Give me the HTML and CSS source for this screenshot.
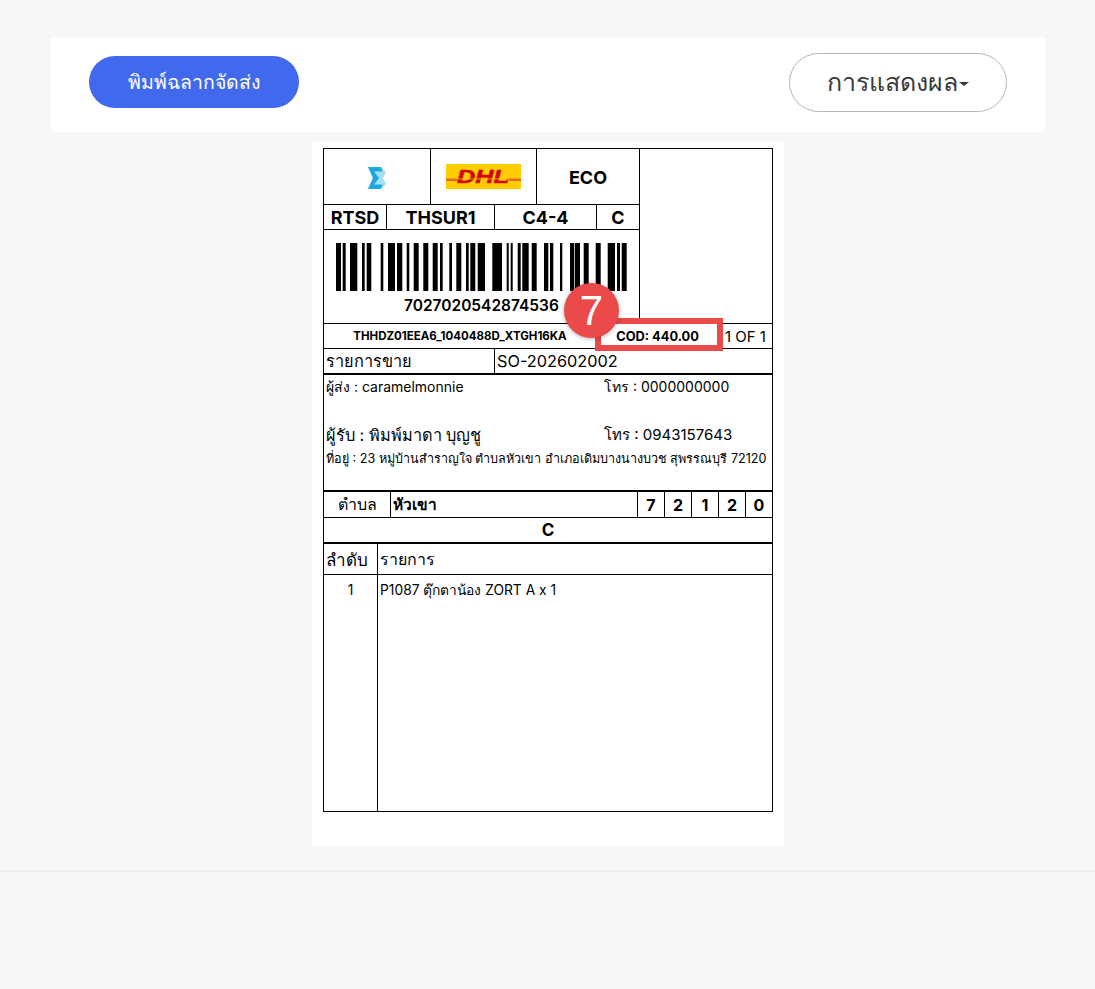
FILE: index.html
```html
<!DOCTYPE html>
<html lang="th">
<head>
  <meta charset="UTF-8" />
  <title>พิมพ์ฉลากจัดส่ง</title>
  <link rel="stylesheet" href="styles.css">
</head>
<body>

  <div class="toolbar">
    <button class="print-btn">พิมพ์ฉลากจัดส่ง</button>
    <button class="view-btn">การแสดงผล<span class="caret"></span></button>
  </div>

  <div class="sheet">
    <div class="label">

      <div class="top">
        <div class="top-left">
          <div class="row row-logos">
            <div class="cell w-zort">
              <svg class="zort" width="18" height="22" viewBox="0 0 18 22">
                <polygon points="0,0 13,0 18,5 15,11 18,17 13,22 0,22 5,11" fill="#a5e0f4"/>
                <polygon points="0,0 13,0 14.5,4.5 6,4.5 11,11 6,17.5 14.5,17.5 13,22 0,22 5,11" fill="#1da6e6"/>
              </svg>
            </div>
            <div class="cell w-dhl">
              <svg width="75" height="25" viewBox="0 0 75 25">
                <rect width="75" height="25" fill="#ffcc00"/>
                <rect x="0" y="14.5" width="12" height="2.5" fill="#e5691a"/>
                <rect x="60" y="14.5" width="15" height="2.5" fill="#e5691a"/>
                <text x="11" y="19" class="dhl-text" textLength="52" lengthAdjust="spacingAndGlyphs">DHL</text>
                <rect x="9" y="14.6" width="55" height="0.7" fill="#ffcc00"/>
              </svg>
            </div>
            <div class="cell w-eco bold big">ECO</div>
          </div>
          <div class="row row-codes bold big">
            <div class="cell w-rtsd">RTSD</div>
            <div class="cell w-hub">THSUR1</div>
            <div class="cell w-zone">C4-4</div>
            <div class="cell grow">C</div>
          </div>
          <div class="barcode">
            <svg width="315" height="50" viewBox="0 0 315 50">
              <g fill="#000">
                <rect x="12" width="5" height="48"/><rect x="18.7" width="3" height="48"/>
                <rect x="26" width="7.3" height="48"/><rect x="38" width="2.7" height="48"/>
                <rect x="42.7" width="4.6" height="48"/><rect x="56.7" width="2.6" height="48"/>
                <rect x="64" width="7" height="48"/><rect x="73" width="5.3" height="48"/>
                <rect x="82.7" width="2.6" height="48"/><rect x="89.7" width="5" height="48"/>
                <rect x="99.3" width="5" height="48"/><rect x="108.7" width="5" height="48"/>
                <rect x="116" width="2.7" height="48"/><rect x="125.3" width="2.7" height="48"/>
                <rect x="132.3" width="5" height="48"/><rect x="142" width="2.7" height="48"/>
                <rect x="146.3" width="5" height="48"/><rect x="153.7" width="7.3" height="48"/>
                <rect x="168.3" width="9.7" height="48"/><rect x="182.7" width="2" height="48"/>
                <rect x="186.7" width="2" height="48"/><rect x="193.7" width="3" height="48"/>
                <rect x="198.3" width="6.4" height="48"/><rect x="207.7" width="5" height="48"/>
                <rect x="220" width="4.3" height="48"/><rect x="226" width="3.3" height="48"/>
                <rect x="236" width="2.3" height="48"/><rect x="246" width="4.3" height="48"/>
                <rect x="251" width="5" height="48"/><rect x="259.7" width="5" height="48"/>
                <rect x="271.7" width="5" height="48"/><rect x="283.7" width="7.3" height="48"/>
                <rect x="293" width="3" height="48"/><rect x="297.7" width="5" height="48"/>
              </g>
            </svg>
            <div class="barcode-num">7027020542874536</div>
          </div>
        </div>
        <div class="top-right"></div>
      </div>

      <div class="row row-order">
        <div class="order-id bold">THHDZ01EEA6_1040488D_XTGH16KA</div>
        <div class="cod bold">COD: 440.00</div>
        <div class="pieces">1 OF 1</div>
      </div>

      <div class="row row-sale thick">
        <div class="cell-left w-sale">รายการขาย</div>
        <div class="cell-left grow">SO-202602002</div>
      </div>

      <div class="address">
        <div class="line line-sender">
          <span class="who">ผู้ส่ง : caramelmonnie</span>
          <span>โทร : 0000000000</span>
        </div>
        <div class="line line-receiver">
          <span class="who">ผู้รับ : พิมพ์มาดา บุญชู</span>
          <span class="phone">โทร : 0943157643</span>
        </div>
        <div class="line-addr">ที่อยู่ : 23 หมู่บ้านสำราญใจ ตำบลหัวเขา อำเภอเดิมบางนางบวช สุพรรณบุรี 72120</div>
      </div>

      <div class="row row-zip">
        <div class="cell w-tambon">ตำบล</div>
        <div class="cell-left grow bold tambon">หัวเขา</div>
        <div class="cell digit bold">7</div>
        <div class="cell digit bold">2</div>
        <div class="cell digit bold">1</div>
        <div class="cell digit bold">2</div>
        <div class="cell digit bold">0</div>
      </div>

      <div class="row row-sort thick bold">C</div>

      <div class="row row-head">
        <div class="cell-left w-no">ลำดับ</div>
        <div class="cell-left grow">รายการ</div>
      </div>

      <div class="items">
        <div class="item-no">1</div>
        <div class="item-text">P1087 ตุ๊กตาน้อง ZORT A x 1</div>
      </div>

    </div>
  </div>

  <div class="footer"></div>

  <div class="highlight"></div>
  <div class="step">7</div>

</body>
</html>
```

FILE: styles.css
```css
html, body {
  margin: 0;
  padding: 0;
}

body {
  position: relative;
  height: 989px;
  overflow: hidden;
  background-color: #f7f7f7;
  color: #000;
  font-family: Inter, "Noto Sans", sans-serif;
  font-size: 17px;
}

button {
  font-family: inherit;
  cursor: pointer;
}

.bold {
  font-weight: 700;
}

.big {
  font-size: 18px;
}

.grow {
  flex: 1;
}

/* toolbar */

.toolbar {
  display: flex;
  align-items: center;
  justify-content: space-between;
  width: 994px;
  height: 94px;
  margin: 38px 0 0 51px;
  padding: 0 38px 6px;
  box-sizing: border-box;
  background-color: #fff;
}

.print-btn {
  width: 210px;
  height: 52px;
  border: 0;
  border-radius: 26px;
  background-color: #4169ee;
  color: #fff;
  font-size: 19.5px;
  font-weight: 500;
}

.view-btn {
  display: flex;
  align-items: center;
  justify-content: center;
  width: 218px;
  height: 59px;
  border: 1px solid #b2b7bc;
  border-radius: 30px;
  background-color: #fff;
  color: #3a3a3a;
  font-size: 25px;
}

.caret {
  width: 0;
  height: 0;
  margin: 3px 0 0 1px;
  border-top: 4px solid #3a3a3a;
  border-left: 5px solid transparent;
  border-right: 5px solid transparent;
}

/* label sheet */

.sheet {
  width: 472px;
  height: 704px;
  margin: 10px 0 0 312px;
  padding: 6px 11px 0;
  box-sizing: border-box;
  background-color: #fff;
}

.label {
  width: 450px;
  height: 664px;
  box-sizing: border-box;
  border: 1px solid #000;
}

.row {
  display: flex;
  box-sizing: border-box;
  border-bottom: 1px solid #000;
}

.row.thick {
  border-bottom-width: 2px;
}

.cell,
.cell-left {
  display: flex;
  align-items: center;
  box-sizing: border-box;
  border-right: 1px solid #000;
}

.cell {
  justify-content: center;
}

.cell-left {
  padding-left: 2px;
}

.cell:last-child,
.cell-left:last-child {
  border-right: 0;
}

.top {
  display: flex;
  height: 174px;
  border-bottom: 1px solid #000;
}

.top-left {
  width: 316px;
  box-sizing: border-box;
  border-right: 1px solid #000;
}

.row-logos {
  height: 56px;
}

.w-zort { width: 107px; }
.w-dhl { width: 106px; }
.w-eco { flex: 1; padding-top: 1px; }

.zort {
  margin-top: 2px;
}

.dhl-text {
  fill: #d40511;
  stroke: #d40511;
  stroke-width: 0.5;
  font-family: "Liberation Sans", sans-serif;
  font-size: 18px;
  font-weight: 700;
  font-style: italic;
}

.row-codes {
  height: 25px;
}

.w-rtsd { width: 63px; }
.w-hub { width: 108px; }
.w-zone { width: 102px; }

.barcode {
  height: 92px;
  padding-top: 13px;
  box-sizing: border-box;
}

.barcode svg {
  display: block;
}

.barcode-num {
  margin-top: 2px;
  margin-left: 80px;
  font-size: 15.5px;
  font-weight: 600;
  line-height: 22px;
}

.row-order {
  height: 25px;
  align-items: center;
}

.order-id {
  width: 272px;
  font-size: 11.5px;
  text-align: center;
}

.cod {
  width: 123px;
  font-size: 12.8px;
  text-align: center;
}

.pieces {
  flex: 1;
  padding-left: 6px;
  font-size: 15px;
  white-space: nowrap;
}

.row-sale {
  height: 26px;
  font-size: 16.3px;
}

.w-sale {
  width: 171px;
}

.address {
  height: 117px;
  padding: 2px 2px 0;
  box-sizing: border-box;
  border-bottom: 2px solid #000;
}

.line {
  display: flex;
}

.who {
  width: 278px;
}

.line-sender {
  font-size: 14px;
  line-height: 20px;
}

.line-receiver {
  margin-top: 26px;
  font-size: 16.3px;
  line-height: 24px;
}

.phone {
  font-size: 15px;
}

.line-addr {
  margin-top: 2px;
  font-size: 12.6px;
  line-height: 20px;
  white-space: nowrap;
}

.row-zip {
  height: 26px;
  font-size: 16px;
}

.w-tambon { width: 67px; }

.row-zip .tambon {
  padding-left: 2px;
  border-right: 1px solid #000;
  font-size: 15.5px;
}

.digit {
  width: 27px;
}

.digit:last-child {
  width: 26px;
}

.row-sort {
  justify-content: center;
  align-items: center;
  height: 26px;
  font-size: 17px;
}

.row-head {
  height: 31px;
  font-size: 16px;
}

.w-no {
  width: 54px;
  font-size: 17px;
}

.items {
  display: flex;
  height: 236px;
  font-size: 13.8px;
  line-height: 20px;
}

.item-no {
  width: 54px;
  box-sizing: border-box;
  padding-top: 5px;
  border-right: 1px solid #000;
  text-align: center;
}

.item-text {
  flex: 1;
  padding: 5px 0 0 2px;
}

.footer {
  margin-top: 25px;
  border-top: 1px solid #eeeeee;
}

/* annotation drawn over the screenshot */

.highlight {
  position: absolute;
  left: 595px;
  top: 318px;
  width: 128px;
  height: 33px;
  box-sizing: border-box;
  border: 6px solid #ea4a4a;
}

.step {
  position: absolute;
  left: 564px;
  top: 283px;
  width: 55px;
  height: 55px;
  border-radius: 50%;
  background-color: #ea4a4a;
  box-shadow: 0 1px 4px rgba(0, 0, 0, 0.3);
  color: #fff;
  font-family: "Liberation Sans", sans-serif;
  font-size: 42px;
  line-height: 55px;
  text-align: center;
}
```
